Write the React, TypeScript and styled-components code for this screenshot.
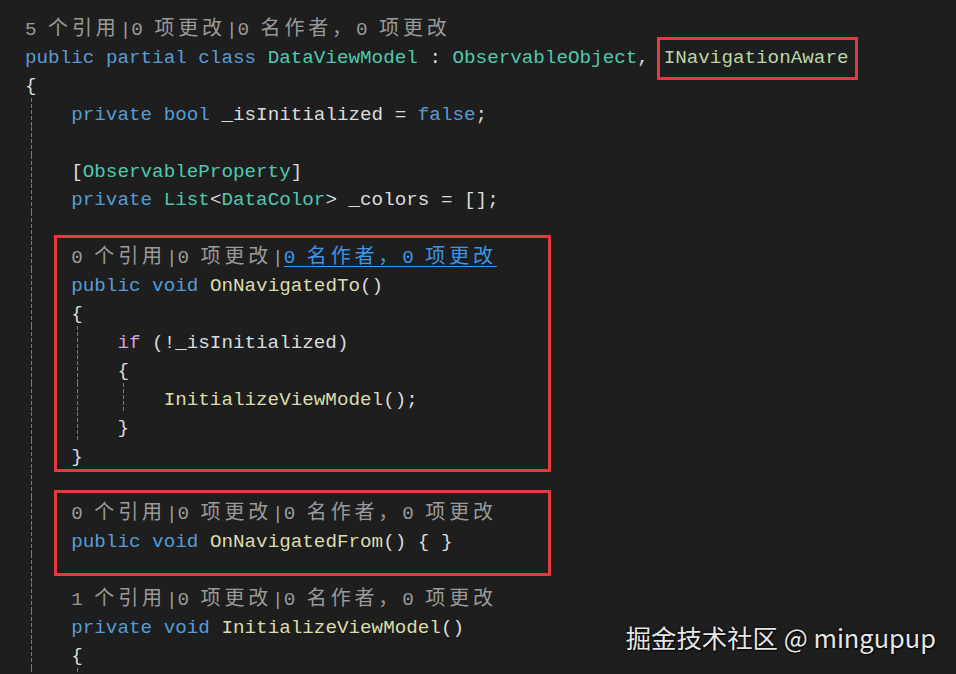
import React from "react";
import styled, { createGlobalStyle, css } from "styled-components";

type Kind = "kw" | "type" | "iface" | "fn" | "ctrl" | "p";

const palette: Record<Kind, string> = {
  kw: "#569cd6",
  type: "#4ec9b0",
  iface: "#b8d7a3",
  fn: "#dcdcaa",
  ctrl: "#d8a0df",
  p: "#dcdcdc",
};

const COL = 11.55;
const LEFT = 25;
const guideX = (level: number) => LEFT + level * 4 * COL + 5.5;

const Global = createGlobalStyle`
  html, body { margin: 0; padding: 0; background: #1e1e1e; }
  body { width: 956px; height: 674px; overflow: hidden; }
`;

const Editor = styled.div`
  position: relative;
  width: 956px;
  height: 674px;
  overflow: hidden;
  box-sizing: border-box;
  padding: 12.75px 0 0 ${LEFT}px;
  background: #1e1e1e;
  font-family: "Liberation Mono", "Noto Sans CJK SC", monospace;
  font-size: 19.25px;
  color: #dcdcdc;
`;

const Line = styled.div<{ $guides?: number[]; $lens?: boolean }>`
  box-sizing: border-box;
  height: 28.5px;
  line-height: 28.5px;
  padding-top: ${({ $lens }) => ($lens ? 0 : 2.5)}px;
  white-space: pre;
  ${({ $guides = [] }) =>
    $guides.length
      ? css`
          background-image: ${$guides
            .map(() => "repeating-linear-gradient(to bottom, #7a7a7a 0 4px, transparent 4px 6px)")
            .join(", ")};
          background-size: 1px 100%;
          background-repeat: no-repeat;
          background-position: ${$guides.map((g) => `${guideX(g) - LEFT}px 0`).join(", ")};
        `
      : ""}
`;

const Tok = styled.span<{ $k: Kind }>`
  color: ${({ $k }) => palette[$k]};
`;

const LensText = styled.span`
  color: #9a9a9a;
`;

const LensLink = styled.span`
  color: #3b96e6;
  text-decoration: underline;
  text-underline-offset: 3px;
  text-decoration-thickness: 1px;
`;

const Han = styled.span`
  font-family: "Noto Sans CJK SC", sans-serif;
  font-size: 20px;
  letter-spacing: 3.85px;
`;

const Callout = styled.span`
  border: 3px solid #e23a3e;
  margin: 0 -9px 0 -3.8px;
  padding: 7.1px 6px 8.1px 4px;
`;

const Frame = styled.div<{ $mt: number; $pt: number; $pb: number; $mb: number; $tail?: number }>`
  box-sizing: border-box;
  width: 497px;
  margin: ${({ $mt }) => -$mt}px 0 ${({ $mb }) => $mb}px 29px;
  padding: ${({ $pt }) => $pt}px 0 ${({ $pb }) => $pb}px 0;
  border: 3px solid #e23a3e;
  & > ${Line} {
    margin-left: -32px;
  }
  & > ${Line}:last-child {
    margin-bottom: ${({ $tail = 0 }) => $tail}px;
  }
`;

const Watermark = styled.div`
  position: absolute;
  right: 20px;
  top: 619px;
  font-family: "Noto Sans CJK SC", "Noto Sans", sans-serif;
  font-size: 25.4px;
  line-height: 36px;
  color: #e6e6e6;
  text-shadow: 0 0 3px rgba(0, 0, 0, 0.9), 1px 1px 1px rgba(0, 0, 0, 0.8);
  white-space: pre;
`;

const HAN = /[\u3000-\u9fff\uff00-\uffef]/;

const splitHan = (s: string) =>
  s.split(/([\u3000-\u9fff\uff00-\uffef]+)/).map((part, i) =>
    HAN.test(part) ? <Han key={i}>{part}</Han> : <React.Fragment key={i}>{part}</React.Fragment>
  );

const Lens: React.FC<{ refs: number; linked?: boolean; indent?: boolean }> = ({ refs, linked, indent }) => (
  <>
    {indent ? "    " : ""}
    <LensText>
      {splitHan(`${refs} 个引用|0 项更改|`)}
      {linked ? <LensLink>{splitHan("0 名作者，0 项更改")}</LensLink> : splitHan("0 名作者，0 项更改")}
    </LensText>
  </>
);

const T = (k: Kind, s: string) => <Tok $k={k}>{s}</Tok>;

export default function App() {
  return (
    <>
      <Global />
      <Editor>
        <Line $lens>
          <Lens refs={5} />
        </Line>
        <Line>
          {T("kw", "public")} {T("kw", "partial")} {T("kw", "class")} {T("type", "DataViewModel")} : {T("type", "ObservableObject")},{" "}
          <Callout>{T("iface", "INavigationAware")}</Callout>
        </Line>
        <Line>{"{"}</Line>
        <Line $guides={[0]}>
          {"    "}
          {T("kw", "private")} {T("kw", "bool")} _isInitialized = {T("kw", "false")};
        </Line>
        <Line $guides={[0]} />
        <Line $guides={[0]}>
          {"    ["}
          {T("type", "ObservableProperty")}]
        </Line>
        <Line $guides={[0]}>
          {"    "}
          {T("kw", "private")} {T("type", "List")}&lt;{T("type", "DataColor")}&gt; _colors = [];
        </Line>
        <Line $guides={[0]} />
        <Frame $mt={5.75} $pt={2.75} $pb={0.25} $mb={-3.25}>
          <Line $guides={[0]} $lens>
            <Lens refs={0} linked indent />
          </Line>
          <Line $guides={[0]}>
            {"    "}
            {T("kw", "public")} {T("kw", "void")} {T("fn", "OnNavigatedTo")}()
          </Line>
          <Line $guides={[0]}>{"    {"}</Line>
          <Line $guides={[0, 1]}>
            {"        "}
            {T("ctrl", "if")} (!_isInitialized)
          </Line>
          <Line $guides={[0, 1]}>{"        {"}</Line>
          <Line $guides={[0, 1, 2]}>
            {"            "}
            {T("fn", "InitializeViewModel")}();
          </Line>
          <Line $guides={[0, 1]}>{"        }"}</Line>
          <Line $guides={[0]}>{"    }"}</Line>
        </Frame>
        <Line $guides={[0]} />
        <Frame $mt={7.25} $pt={4.25} $pb={0} $mb={6.75} $tail={-9.75}>
          <Line $guides={[0]} $lens>
            <Lens refs={0} indent />
          </Line>
          <Line $guides={[0]}>
            {"    "}
            {T("kw", "public")} {T("kw", "void")} {T("fn", "OnNavigatedFrom")}() {"{ }"}
          </Line>
          <Line $guides={[0]} />
        </Frame>
        <Line $guides={[0]} $lens>
          <Lens refs={1} indent />
        </Line>
        <Line $guides={[0]}>
          {"    "}
          {T("kw", "private")} {T("kw", "void")} {T("fn", "InitializeViewModel")}()
        </Line>
        <Line $guides={[0]}>{"    {"}</Line>
        <Line $guides={[0, 1]}>
          {"        "}_colors = {T("fn", "LoadDataColors")}();
        </Line>
        <Watermark>掘金技术社区 @ mingupup</Watermark>
      </Editor>
    </>
  );
}
